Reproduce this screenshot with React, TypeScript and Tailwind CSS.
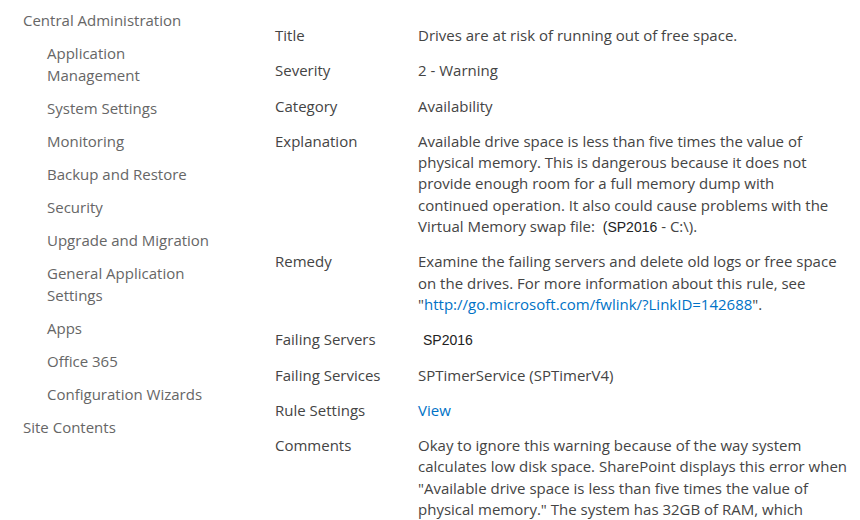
import React from "react";

const nav: { label: string; level: number }[] = [
  { label: "Central Administration", level: 0 },
  { label: "Application Management", level: 1 },
  { label: "System Settings", level: 1 },
  { label: "Monitoring", level: 1 },
  { label: "Backup and Restore", level: 1 },
  { label: "Security", level: 1 },
  { label: "Upgrade and Migration", level: 1 },
  { label: "General Application Settings", level: 1 },
  { label: "Apps", level: 1 },
  { label: "Office 365", level: 1 },
  { label: "Configuration Wizards", level: 1 },
  { label: "Site Contents", level: 0 },
];

const arial = { fontFamily: '"Liberation Sans", Arial, sans-serif' };

function Row({ label, children }: { label: string; children: React.ReactNode }) {
  return (
    <div className="flex py-[7px]">
      <div className="w-[143px] shrink-0 text-[#444]">{label}</div>
      <div className="w-[436px] text-[#444]">{children}</div>
    </div>
  );
}

export default function App() {
  return (
    <div
      className="w-[860px] h-[520px] overflow-hidden bg-white flex text-[15px] leading-[21.3px]"
      style={{ fontFamily: '"Open Sans", "Noto Sans", sans-serif' }}
    >
      <nav className="w-[275px] shrink-0 pl-[23px] pt-[3.5px] text-[#666] leading-[22px]">
        {nav.map((n) => (
          <div
            key={n.label}
            className={
              n.level === 0
                ? "py-[5.5px] w-[200px]"
                : "py-[5.5px] ml-[24px] w-[172px]"
            }
          >
            {n.label}
          </div>
        ))}
      </nav>
      <main className="pt-[18px]">
        <Row label="Title">Drives are at risk of running out of free space.</Row>
        <Row label="Severity">2 - Warning</Row>
        <Row label="Category">Availability</Row>
        <Row label="Explanation">
          Available drive space is less than five times the value of physical memory. This is
          dangerous because it does not provide enough room for a full memory dump with
          <br />
          continued operation. It also could cause problems with the Virtual Memory swap
          file:&nbsp;{" "}
          <span className="text-[#222] text-[14px] leading-[1]" style={arial}>
            (SP2016
          </span>{" "}
          - C:\).
        </Row>
        <Row label="Remedy">
          Examine the failing servers and delete old logs or free space on the drives. For more
          information about this rule, see "
          <a className="text-[#0072c6]">http://go.microsoft.com/fwlink/?LinkID=142688</a>".
        </Row>
        <Row label="Failing Servers">
          <span className="pl-[5px] text-[#222] text-[14px] leading-[1]" style={arial}>
            SP2016
          </span>
        </Row>
        <Row label="Failing Services">SPTimerService (SPTimerV4)</Row>
        <Row label="Rule Settings">
          <a className="text-[#0072c6]">View</a>
        </Row>
        <Row label="Comments">
          Okay to ignore this warning because of the way system calculates low disk space.
          SharePoint displays this error when "Available drive space is less than five times the
          value of physical memory." The system has 32GB of RAM, which
        </Row>
      </main>
    </div>
  );
}
